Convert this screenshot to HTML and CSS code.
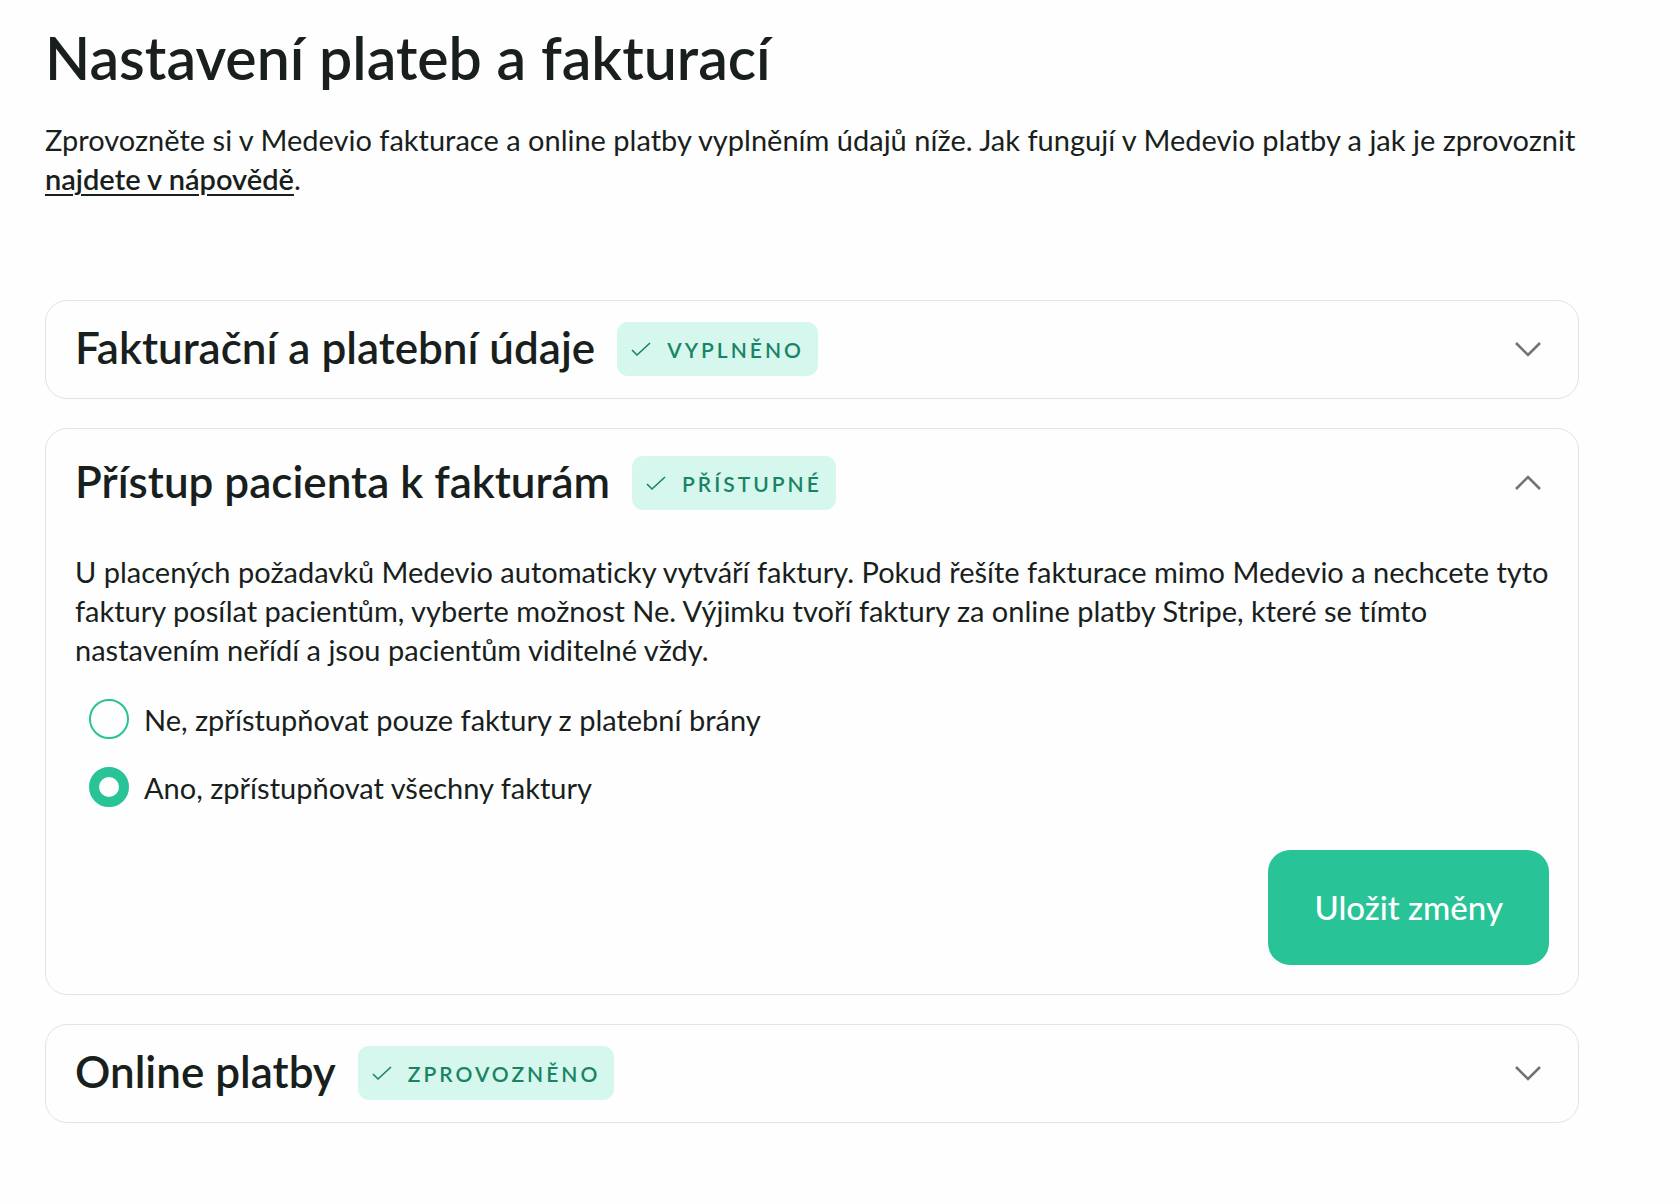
FILE: index.html
```html
<!DOCTYPE html>
<html lang="cs">
<head>
<meta charset="utf-8">
<meta name="viewport" content="width=device-width, initial-scale=1">
<title>Nastavení plateb a fakturací</title>
<link rel="stylesheet" href="styles.css">
</head>
<body>
<main class="page">
  <h1 class="page-title">Nastavení plateb a fakturací</h1>
  <p class="text">Zprovozněte si v Medevio fakturace a online platby vyplněním údajů níže. Jak fungují v Medevio platby a jak je zprovoznit <a class="link" href="#napoveda">najdete v nápovědě</a>.</p>

  <div class="panels">
    <section class="panel">
      <h2 class="panel-heading">
        <button class="panel-toggle" type="button" aria-expanded="false">
          <span class="panel-title">Fakturační a platební údaje</span>
          <span class="badge"><svg class="check" viewBox="0 0 20 16" aria-hidden="true"><path d="M1 9l5 5L19 2"/></svg>VYPLNĚNO</span>
          <svg class="chevron" viewBox="0 0 26 16" aria-hidden="true"><path d="M1 2l12 12L25 2"/></svg>
        </button>
      </h2>
    </section>

    <section class="panel panel-open">
      <h2 class="panel-heading">
        <button class="panel-toggle" type="button" aria-expanded="true" aria-controls="pristup">
          <span class="panel-title">Přístup pacienta k fakturám</span>
          <span class="badge"><svg class="check" viewBox="0 0 20 16" aria-hidden="true"><path d="M1 9l5 5L19 2"/></svg>PŘÍSTUPNÉ</span>
          <svg class="chevron" viewBox="0 0 26 16" aria-hidden="true"><path d="M1 14L13 2l12 12"/></svg>
        </button>
      </h2>
      <form class="panel-body" id="pristup">
        <p class="text">U placených požadavků Medevio automaticky vytváří faktury. Pokud řešíte fakturace mimo Medevio a nechcete tyto faktury posílat pacientům, vyberte možnost Ne. Výjimku tvoří faktury za online platby Stripe, které se tímto nastavením neřídí a jsou pacientům viditelné vždy.</p>
        <div class="options">
          <label class="option"><input class="radio" type="radio" name="access" value="no">Ne, zpřístupňovat pouze faktury z platební brány</label>
          <label class="option"><input class="radio" type="radio" name="access" value="yes" checked>Ano, zpřístupňovat všechny faktury</label>
        </div>
        <button class="save" type="submit">Uložit změny</button>
      </form>
    </section>

    <section class="panel">
      <h2 class="panel-heading">
        <button class="panel-toggle" type="button" aria-expanded="false">
          <span class="panel-title">Online platby</span>
          <span class="badge"><svg class="check" viewBox="0 0 20 16" aria-hidden="true"><path d="M1 9l5 5L19 2"/></svg>ZPROVOZNĚNO</span>
          <svg class="chevron" viewBox="0 0 26 16" aria-hidden="true"><path d="M1 2l12 12L25 2"/></svg>
        </button>
      </h2>
    </section>
  </div>
</main>
</body>
</html>
```
FILE: styles.css
```css
* {
  box-sizing: border-box;
}

body {
  margin: 0;
  background: #fefefe;
  color: #191f1d;
  font-family: Lato, "Noto Sans", sans-serif;
  font-size: 29px;
  font-variant-ligatures: none;
  line-height: 39px;
}

.page {
  padding: 22px 99px 80px 45px;
}

.page-title {
  margin: 0 0 26px;
  font-size: 59px;
  font-weight: 600;
  line-height: 72px;
}

.text {
  margin: 0;
}

.link {
  color: inherit;
  font-weight: 600;
  text-decoration-thickness: 2px;
  text-underline-offset: 4px;
}

.panels {
  display: flex;
  flex-direction: column;
  gap: 29px;
  margin-top: 102px;
}

.panel {
  padding: 21px 29px 22px;
  border: 1px solid #e3e3e3;
  border-radius: 22px;
}

.panel-open {
  padding: 27px 29px 29px;
}

.panel-heading {
  margin: 0;
  font-size: 44px;
  font-weight: 600;
}

.panel-toggle {
  display: flex;
  align-items: center;
  gap: 22px;
  width: 100%;
  padding: 0 8px 0 0;
  border: 0;
  background: none;
  color: inherit;
  font: inherit;
  text-align: left;
  cursor: pointer;
}

.panel-title {
  padding-bottom: 4px;
  line-height: 48px;
}

.badge {
  display: flex;
  align-items: center;
  gap: 16px;
  height: 54px;
  padding: 0 14px;
  border-radius: 11px;
  background: #d5f7ed;
  color: #188463;
  font-size: 21px;
  letter-spacing: 3px;
}

.check {
  width: 20px;
  height: 16px;
  fill: none;
  stroke: currentColor;
  stroke-width: 1.6;
}

.chevron {
  width: 26px;
  height: 16px;
  margin-left: auto;
  fill: none;
  stroke: #737373;
  stroke-width: 2.6;
}

.panel-body {
  display: flex;
  flex-direction: column;
  padding-top: 42px;
}

.options {
  display: flex;
  flex-direction: column;
  gap: 28px;
  padding: 30px 14px 43px;
}

.option {
  display: flex;
  align-items: center;
  gap: 15px;
}

.radio {
  appearance: none;
  flex: none;
  width: 40px;
  height: 40px;
  margin: 0;
  border: 2px solid #28c397;
  border-radius: 50%;
}

.radio:checked {
  border-width: 10px;
}

.save {
  align-self: flex-end;
  padding: 36px 46px;
  border: 0;
  border-radius: 22px;
  background: #28c397;
  color: #fff;
  font: inherit;
  font-size: 33px;
  font-weight: 500;
  line-height: 43px;
  cursor: pointer;
}
```
